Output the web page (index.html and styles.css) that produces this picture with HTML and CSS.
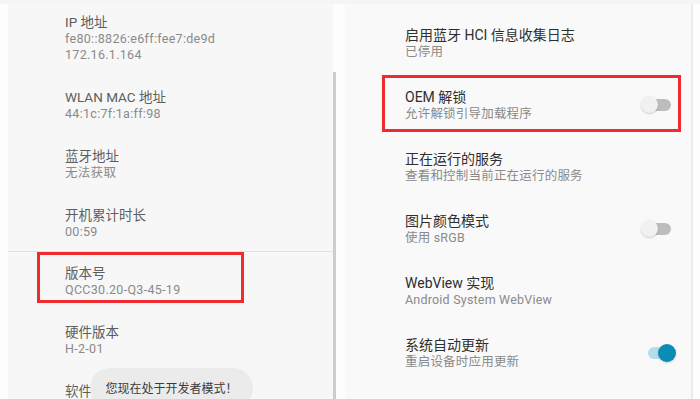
FILE: index.html
```html
<!DOCTYPE html>
<html lang="zh-CN">
<head>
    <meta charset="UTF-8">
    <meta name="viewport" content="width=device-width, initial-scale=1.0">
    <title>开发者选项</title>
    <link rel="stylesheet" href="styles.css">
</head>
<body>
    <div class="topbar"></div>
    <div class="panes">
        <div class="pane pane-left">
            <div class="item first">
                <div class="title">IP 地址</div>
                <div class="sub">fe80::8826:e6ff:fee7:de9d</div>
                <div class="sub">172.16.1.164</div>
            </div>
            <div class="item">
                <div class="title">WLAN MAC 地址</div>
                <div class="sub">44:1c:7f:1a:ff:98</div>
            </div>
            <div class="item">
                <div class="title">蓝牙地址</div>
                <div class="sub">无法获取</div>
            </div>
            <div class="item last">
                <div class="title">开机累计时长</div>
                <div class="sub">00:59</div>
            </div>
            <div class="divider"></div>
            <div class="item marked">
                <div class="title">版本号</div>
                <div class="sub">QCC30.20-Q3-45-19</div>
                <div class="mark mark-version"></div>
            </div>
            <div class="item">
                <div class="title">硬件版本</div>
                <div class="sub">H-2-01</div>
            </div>
            <div class="item">
                <div class="title">软件版本</div>
                <div class="sub">&nbsp;</div>
            </div>
            <div class="toast">您现在处于开发者模式！</div>
        </div>
        <div class="scrollbar"></div>
        <div class="pane pane-right">
            <div class="row first">
                <div class="text">
                    <div class="title">启用蓝牙 HCI 信息收集日志</div>
                    <div class="sub">已停用</div>
                </div>
            </div>
            <div class="row marked">
                <div class="text">
                    <div class="title">OEM 解锁</div>
                    <div class="sub">允许解锁引导加载程序</div>
                </div>
                <div class="switch"><span class="knob"></span></div>
                <div class="mark mark-oem"></div>
            </div>
            <div class="row">
                <div class="text">
                    <div class="title">正在运行的服务</div>
                    <div class="sub">查看和控制当前正在运行的服务</div>
                </div>
            </div>
            <div class="row">
                <div class="text">
                    <div class="title">图片颜色模式</div>
                    <div class="sub">使用 sRGB</div>
                </div>
                <div class="switch"><span class="knob"></span></div>
            </div>
            <div class="row">
                <div class="text">
                    <div class="title">WebView 实现</div>
                    <div class="sub">Android System WebView</div>
                </div>
            </div>
            <div class="row">
                <div class="text">
                    <div class="title">系统自动更新</div>
                    <div class="sub">重启设备时应用更新</div>
                </div>
                <div class="switch on"><span class="knob"></span></div>
            </div>
            <div class="row faded">
                <div class="text">
                    <div class="title">演示模式</div>
                </div>
            </div>
        </div>
    </div>
</body>
</html>
```

FILE: styles.css
```css
body {
    font-family: Roboto, "Noto Sans CJK SC", sans-serif;
    margin: 0;
    width: 700px;
    height: 399px;
    overflow: hidden;
    background: #fdfdfd;
}
.topbar {
    height: 4px;
    background: #f3f6f9;
}
.panes {
    display: flex;
    height: 395px;
}
.pane {
    position: relative;
    overflow: hidden;
}
.pane-left {
    width: 325px;
    margin-left: 8px;
    background: #f7f7f7;
}
.scrollbar {
    width: 3px;
    margin-top: 68px;
    background: #cdcdcd;
}
.pane-right {
    width: 346px;
    margin-left: 9px;
    background: #f9f9f9;
    border-right: 2px solid #ececec;
}

/* left list */
.item {
    position: relative;
    padding: 12px 0 13px 57px;
}
.item.first {
    padding-top: 9px;
}
.item.last {
    padding-bottom: 11px;
}
.pane-left .title {
    font-size: 13.5px;
    line-height: 18px;
    color: #5e5e5e;
}
.pane-left .sub {
    font-size: 12.5px;
    line-height: 16px;
    letter-spacing: 0.3px;
    color: #8a8a8a;
}
.divider {
    height: 1px;
    background: #e2e2e2;
}
.toast {
    position: absolute;
    left: 82px;
    top: 364px;
    width: 163px;
    height: 40px;
    border-radius: 20px;
    background: #ebebeb;
    color: #3a3a3a;
    font-size: 12px;
    text-align: center;
    line-height: 42px;
}

/* right list */
.row {
    position: relative;
    display: flex;
    align-items: center;
    height: 34px;
    padding: 14px 0;
    padding-left: 60px;
}
.row.first {
    margin-top: 8px;
}
.text {
    flex: 1;
}
.pane-right .title {
    font-size: 14px;
    line-height: 18px;
    color: #2f2f2f;
}
.pane-right .sub {
    font-size: 12.5px;
    line-height: 16px;
    letter-spacing: 0.2px;
    color: #8a8a8a;
}
.row.faded {
    margin-top: -4px;
}
.row.faded .title {
    color: #dcdcdc;
}

.switch {
    position: relative;
    width: 24px;
    height: 12px;
    margin-right: 20px;
    border-radius: 6px;
    background: #bdbdbd;
}
.knob {
    position: absolute;
    left: -6px;
    top: -3px;
    width: 17px;
    height: 17px;
    border-radius: 50%;
    background: #f1f1f1;
    box-shadow: 0 1px 2px rgba(0,0,0,0.18);
}
.switch.on {
    background: #b5dce9;
    margin-right: 19px;
}
.switch.on .knob {
    left: 10px;
    width: 18px;
    height: 18px;
    background: #0a8cb4;
}

/* red annotation boxes */
.mark {
    position: absolute;
    border: 3px solid #f02a2e;
    box-sizing: border-box;
}
.mark-version {
    left: 29px;
    top: 0;
    width: 207px;
    height: 51px;
}
.mark-oem {
    left: 37px;
    top: 1px;
    width: 299px;
    height: 57px;
}
```
